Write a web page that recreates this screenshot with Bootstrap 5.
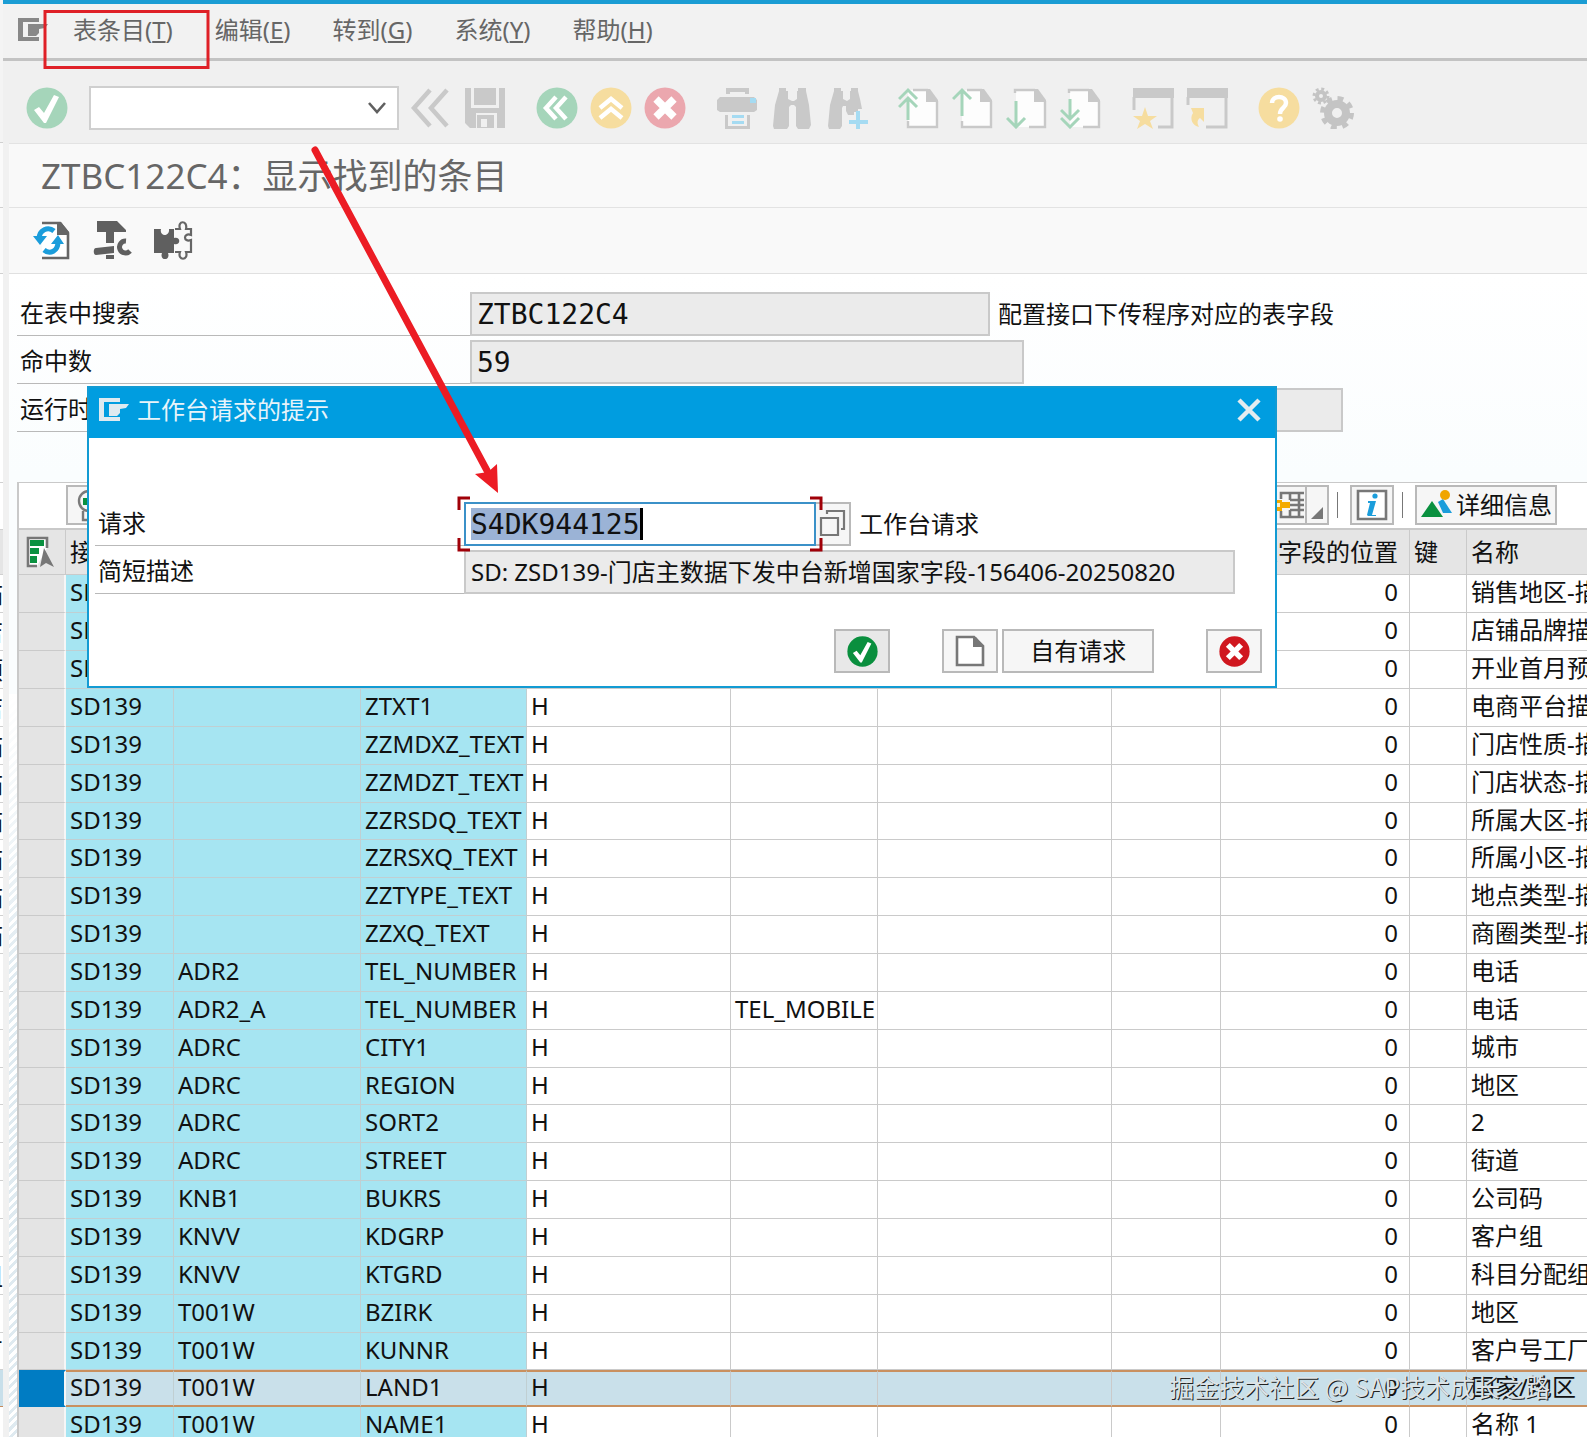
<!DOCTYPE html>
<html lang="zh-CN">
<head>
<meta charset="utf-8">
<meta name="viewport" content="width=device-width, initial-scale=1">
<title>ZTBC122C4：显示找到的条目</title>
<link href="https://cdn.jsdelivr.net/npm/bootstrap@5.3.0/dist/css/bootstrap.min.css" rel="stylesheet">
<style>
  body { font-family: "Noto Sans", "Noto Sans CJK SC", sans-serif; font-size: 24px; line-height: 36px; color: #111; background: #fff; }
  svg { display: block; flex: none; }
  .screen { height: 100vh; overflow: hidden; }
  .sliver { width: 3px; flex: none; overflow: hidden; background: #fff; }
  .sliver div { display: flex; justify-content: flex-end; align-items: center; white-space: nowrap; border-bottom: 1px solid #d0d0d0; height: 38px; }
  .sliver .cut:nth-child(7n+6) { height: 37px; }
  .sliver .s-blank { height: 143px; background: #f4f4f4; }
  .sliver .s-title { height: 65px; background: #fafafa; }
  .sliver .s-tools { height: 66px; background: #fafafa; }
  .sliver .s-form { height: 209px; }
  .sliver .s-bar { height: 47px; }
  .sliver .s-head { height: 45px; background: #e5e5e5; }
  .sliver .s-sel { height: 37px; background: #c8dfea; border-color: #c58a5c; }
  .window { min-width: 0; background: #f1f1f1; }
  .menu-strip { flex: none; height: 61px; padding: 4px 0 6px 15px; border-top: 4px solid #1b9dd4; border-bottom: 3px solid #c3c3c3; background: #f2f2f2; }
  .menu-strip a { color: #666; text-decoration: none; margin-right: 42px; white-space: nowrap; }
  .menu-icon { margin-right: 25px; }
  .std-bar { flex: none; height: 82px; padding: 12px 0 0 23px; background: #f0f0f0; }
  .set { display: flex; gap: 12px; }
  .set.wide { gap: 13px; }
  .sets { display: flex; gap: 30px; }
  .tool { border: 0; background: none; padding: 0; }
  .combo { width: 310px; height: 44px; margin: 0 11px 0 21px; border: 2px solid #cfcfcf; border-radius: 0; background-color: #fff;
    --bs-form-select-bg-img: url("data:image/svg+xml,%3Csvg xmlns='http://www.w3.org/2000/svg' viewBox='0 0 18 12'%3E%3Cpath d='M1 1l8 9 8-9' fill='none' stroke='%23606060' stroke-width='2.6'/%3E%3C/svg%3E");
    background-image: var(--bs-form-select-bg-img); background-size: 18px 12px; background-position: right 11px center; }
  .client { margin-left: 6px; }
  .title-bar { flex: none; height: 65px; border-top: 1px solid #e3e3e3; border-bottom: 1px solid #e3e3e3; background: #f9f9f9; padding-left: 32px; }
  .title-bar h1 { font-size: 35px; font-weight: 400; line-height: 48px; color: #666; margin: 0; }
  .app-bar { flex: none; height: 66px; border-bottom: 1px solid #e0e0e0; background: #f9f9f9; padding-left: 23px; gap: 18px; }
  .work { position: relative; padding: 18px 0 0 8px; background: linear-gradient(#fff, #fafdfe 200px); }
  .hatch { position: absolute; left: 0; top: 420px; bottom: 0; width: 8px; background: linear-gradient(#fff, transparent 300px), repeating-linear-gradient(135deg, #fff 0 3px, #dfeaf0 3px 6px); }
  .field-row { height: 44px; margin-bottom: 4px; }
  .field-row label.cap, .req-row label.cap { border-bottom: 1px solid #b9b9b9; padding-left: 3px; align-self: stretch; line-height: 42px; flex: none; }
  .field-row label.cap { width: 453px; }
  .ro { height: 44px; border: 2px solid #c9c9c9; border-radius: 0; background: #ebebeb; color: #111; padding: 0 5px; flex: none; font-size: 24px; }
  .mono { font-family: "DejaVu Sans Mono", monospace; font-size: 28px; }
  .w-a { width: 520px; } .w-b { width: 554px; } .w-c { width: 873px; }
  .grid-box { margin-top: 50px; border-top: 1px solid #c9c9c9; border-left: 2px solid #c9c9c9; background: #fff; }
  .grid-bar { height: 47px; padding: 2px 30px 4px 47px; border-bottom: 2px solid #c9c9c9; }
  .face { border: 2px solid #b9b9b9; border-radius: 0; background: #f6f6f6; color: #111; padding: 0; height: 40px; display: flex; align-items: center; justify-content: center; font-size: 24px; line-height: 36px; white-space: nowrap; }
  .w-44 { width: 44px; } .w-142 { width: 142px; gap: 4px; }
  .bar-sep { width: 1px; height: 26px; background: #777; }
  .alv { table-layout: fixed; width: 100%; margin: 0; border-collapse: separate; border-spacing: 0; }
  .alv th, .alv td { height: 38px; padding: 0 0 3px 4px; overflow: hidden; white-space: nowrap; font-weight: 400; line-height: 34px; border-right: 1px solid #cacaca; border-bottom: 1px solid #cacaca; }
  .alv tbody tr:nth-child(7n) td { height: 37px; line-height: 33px; }
  .alv th { height: 45px; background: #e5e5e5; padding-bottom: 0; }
  .alv th:last-child, .alv td:last-child { border-right: 0; }
  .alv td:first-child { background: #e4e4e4; border-right: 2px solid #f6f6f6; }
  .alv .key { background: #a6e5f2; border-color: #c0cfd2; }
  .alv .num { text-align: right; padding-right: 11px; }
  .alv tbody .picked td { background: #c9e0ea; height: 37px; border-bottom: 2px solid #c9905f; border-top: 2px solid #c9905f; line-height: 30px; padding-bottom: 3px; }
  .alv tbody .picked td:first-child { background: #007cc3; border-color: #007cc3; border-right: 2px solid #f6f6f6; }
  .ask { position: absolute; left: 87px; top: 386px; width: 75%; height: 302px; border: 2px solid #129bd3; background: #fff; z-index: 2; }
  .ask-head { height: 50px; background: #009de0; color: #e8f4fa; padding: 0 14px 6px 10px; }
  .ask-body { padding: 64px 13px 0 6px; }
  .req-row { height: 44px; margin-bottom: 4px; }
  .req-row label.cap { width: 369px; }
  .entry { width: 352px; height: 44px; border: 2px solid #3b91c8; border-radius: 0; padding: 0 0 0 5px; color: #111;
    background: linear-gradient(#9bb3d6, #9bb3d6) 5px 4px / 169px 32px no-repeat, linear-gradient(#000, #000) 173px 4px / 4px 32px no-repeat, #fff; }
  .entry-wrap { position: relative; flex: none; }
  .brackets { position: absolute; left: -7px; top: -6px; pointer-events: none; z-index: 1; }
  .f4 { width: 35px; height: 44px; border-left: 0; flex: none; }
  .w-desc { width: 771px; padding-bottom: 4px; }
  .ask-foot { margin-top: 35px; }
  .ask-foot .face { height: 44px; }
  .ask-foot .default { background: #e8e8e8; }
  .w-56 { width: 56px; } .w-152 { width: 152px; }
  .gap-a { margin-right: 52px; } .gap-b { margin-right: 4px; }
  .note { position: absolute; left: 0; top: 0; z-index: 3; pointer-events: none; }
  .sign { position: absolute; right: 37px; bottom: 33px; z-index: 3; font-family: "Noto Sans CJK SC", sans-serif; font-size: 25px; color: #dde3e6; text-shadow: 1px 1px 0 #222; white-space: nowrap; pointer-events: none; }
</style>
<script src="https://cdn.jsdelivr.net/npm/bootstrap@5.3.0/dist/js/bootstrap.bundle.min.js"></script>
</head>
<body>
<svg width="0" height="0" class="position-absolute" aria-hidden="true">
  <defs>
    <symbol id="hand" viewBox="0 0 30 24"><path d="M0 0h21v4H5v15h16v4H0zM10 6h20l-3 4-6 1v4l-3 3h-8z"/></symbol>
    <symbol id="tick" viewBox="0 0 42 42"><circle cx="21" cy="21" r="20.5"/><path d="M8 23l5-3 5 6L28 8l5 2-13 26h-2z" fill="#fff"/></symbol>
    <symbol id="cross" viewBox="0 0 42 42"><circle cx="21" cy="21" r="20.5"/><path d="M12 12l18 18M30 12L12 30" stroke="#fff" stroke-width="7.500"/></symbol>
    <symbol id="sheet" viewBox="0 0 42 42"><path d="M12 3h19l9 12v25H10V3z" fill="#fdfdfd"/><path d="M15 3h15M39 14v26H10v-6" fill="none" stroke="#c9c9c9" stroke-width="2.4"/><path d="M28 2h4l8 11v2H28z" fill="#c9c9c9"/></symbol>
    <symbol id="sheet2" viewBox="0 0 42 42"><path d="M12 3h19l9 12v25H10V3z" fill="#fdfdfd"/><path d="M9 6V3h20M39 14v26H23" fill="none" stroke="#c9c9c9" stroke-width="2.4"/><path d="M28 2h4l8 11v2H28z" fill="#c9c9c9"/></symbol>
  </defs>
</svg>

<div class="screen d-flex position-relative">
  <aside class="sliver" id="sliver" aria-hidden="true"></aside>
  <main class="window flex-fill d-flex flex-column">
    <nav class="menu-strip d-flex align-items-center">
      <svg width="30" height="24" fill="#888" class="menu-icon"><use href="#hand"/></svg>
      <a href="#">表条目(<u>T</u>)</a><a href="#">编辑(<u>E</u>)</a><a href="#">转到(<u>G</u>)</a><a href="#">系统(<u>Y</u>)</a><a href="#">帮助(<u>H</u>)</a>
    </nav>

    <div class="std-bar d-flex align-items-center flex-nowrap">
      <button class="tool" aria-label="回车"><svg width="42" height="42" fill="#a5d5ba"><use href="#tick"/></svg></button>
      <select class="form-select combo flex-shrink-0" aria-label="命令"><option></option></select>
      <div class="sets">
        <div class="set">
          <button class="tool" aria-label="收起"><svg width="42" height="42" fill="none" stroke="#c9c9c9" stroke-width="4.5"><path d="M20 3L4 21l16 18M37 3L21 21l16 18"/></svg></button>
          <button class="tool" aria-label="保存"><svg width="42" height="42" fill="#c9c9c9"><path d="M1 1h6v20h28V1h6v40H33V26H12v15H6l-5-5z"/><path d="M10 1h22v17H10zM13 28h17v13H13z"/><path d="M17 32h6v8h-6z" fill="#f0f0f0"/></svg></button>
        </div>
        <div class="set">
          <button class="tool" aria-label="返回"><svg width="42" height="42"><circle cx="21" cy="21" r="20.5" fill="#a5d5ba"/><path d="M20 10L10 21l10 11M30 10L20 21l10 11" fill="none" stroke="#fff" stroke-width="4.5"/></svg></button>
          <button class="tool" aria-label="退出"><svg width="42" height="42"><circle cx="21" cy="21" r="20.5" fill="#f6dd9f"/><path d="M10 21l11-9 11 9M10 31l11-9 11 9" fill="none" stroke="#fff" stroke-width="4.5"/></svg></button>
          <button class="tool" aria-label="取消"><svg width="42" height="42" fill="#eba7ae"><use href="#cross"/></svg></button>
        </div>
        <div class="set wide">
          <button class="tool" aria-label="打印"><svg width="42" height="42" fill="#c9c9c9"><path d="M10 1h23v6h-4V5H14v2h-4zM4 10h34l3 3v10l-3 2H4l-3-2V13z"/><path d="M34 11h6v5h-6zM16 28h12v3H16zM16 34h12v3H16z" fill="#a5dbf2"/><path d="M9 28h3v11h19V28h3v14H9z"/></svg></button>
          <button class="tool" aria-label="查找"><svg width="42" height="42" fill="#c9c9c9"><path d="M8 1h7v3h2v8l4 2h2l3-2V4h1V1h8v3l3 14 2 20-2 4H27l-2-3V20l-2-2h-3l-2 2v19l-2 3H3l-1-3 2-21L8 4z"/></svg></button>
          <button class="tool" aria-label="继续查找"><svg width="42" height="42" fill="#c9c9c9"><path d="M8 1h7v3h2v8l4 2 3-2V4h1V1h7v3l2 8 2 10h-4v3h-4v3h-6l-2-4v-5h-3l-1 2v18l-2 3H3l-1-3 2-21L8 4z"/><path d="M30 24h4v9h8v4h-8v6h-4v-6h-7v-4h7z" fill="#a5dbf2"/></svg></button>
        </div>
        <div class="set">
          <button class="tool" aria-label="第一页"><svg width="42" height="42"><use href="#sheet"/><g fill="none" stroke="#a5d5ba" stroke-width="3"><path d="M1 12L10 3l9 9M1 20l9-9 9 9M10 11v22"/></g></svg></button>
          <button class="tool" aria-label="上一页"><svg width="42" height="42"><use href="#sheet"/><path d="M1 12L10 3l9 9M10 3v26" fill="none" stroke="#a5d5ba" stroke-width="3"/></svg></button>
          <button class="tool" aria-label="下一页"><svg width="42" height="42"><use href="#sheet2"/><path d="M1 31l9 9 9-9M10 40V14" fill="none" stroke="#a5d5ba" stroke-width="3"/></svg></button>
          <button class="tool" aria-label="最后一页"><svg width="42" height="42"><use href="#sheet2"/><path d="M1 23l9 9 9-9M1 31l9 9 9-9M10 32V12" fill="none" stroke="#a5d5ba" stroke-width="3"/></svg></button>
        </div>
        <div class="set">
          <button class="tool" aria-label="新会话"><svg width="42" height="42"><path d="M1 1h41v10H1z" fill="#c9c9c9"/><path d="M2 10v13M40 10v30H26" fill="none" stroke="#c9c9c9" stroke-width="3"/><path d="M13 20l3 9h9l-7 5 3 8-8-5-8 5 3-8-7-5h9z" fill="#f6dd9f"/></svg></button>
          <button class="tool" aria-label="快捷方式"><svg width="42" height="42"><path d="M1 1h41v10H1z" fill="#c9c9c9"/><path d="M2 10v8M40 10v30H20" fill="none" stroke="#c9c9c9" stroke-width="3"/><path d="M5 21h13v14l-4-4c-3 2-3 5-1 9-6-1-10-8-6-14z" fill="#f6dd9f"/></svg></button>
        </div>
        <div class="set">
          <button class="tool" aria-label="帮助"><svg width="42" height="42"><circle cx="21" cy="21" r="20.5" fill="#f6dd9f"/><path d="M14 16c0-8 14-8 14 0 0 5-6 5-6 11" fill="none" stroke="#fff" stroke-width="4.5"/><circle cx="22" cy="32" r="2.8" fill="#fff"/></svg></button>
          <button class="tool" aria-label="定制"><svg width="42" height="42" fill="none" stroke="#c4c4c4"><circle cx="25" cy="26" r="9" stroke-width="8"/><circle cx="25" cy="26" r="14.5" stroke-width="5" stroke-dasharray="5.8 5.6"/><circle cx="9" cy="9" r="4" stroke-width="4"/><circle cx="9" cy="9" r="7" stroke-width="3" stroke-dasharray="2.9 2.6"/></svg></button>
        </div>
      </div>
    </div>

    <div class="client flex-fill d-flex flex-column">
      <header class="title-bar d-flex align-items-center"><h1>ZTBC122C4：显示找到的条目</h1></header>
      <div class="app-bar d-flex align-items-center">
        <button class="tool" aria-label="刷新"><svg width="42" height="42"><path d="M10 3h18l8 10v25H10" fill="#fff" stroke="#666" stroke-width="2.6"/><path d="M25 2h4l8 10v3H25z" fill="#666"/><g fill="none" stroke="#1b9ddb" stroke-width="5"><path d="M7 19c0-9 9-13 15-8"/><path d="M26 22c0 9-8 13-14 8"/></g><path d="M1 16h14l-7 9zM19 24h13l-6-9z" fill="#1b9ddb"/></svg></button>
        <button class="tool" aria-label="工具"><svg width="42" height="42" fill="#5f5f5f"><path d="M5 1h20l9 9v2H22v11h-8V12H5zM4 28l18-2v7L4 35c-3 0-3-7 0-7zM14 35h8v4h-8z"/><path d="M34 21a6 6 0 1 0 4 10" fill="none" stroke="#5f5f5f" stroke-width="5"/></svg></button>
        <button class="tool" aria-label="组件"><svg width="42" height="42"><path d="M2 9h7c-2 8 9 8 8 0h5v9c7-2 7 8 0 6v9h-6c3 8-9 8-6 0H2z" fill="#5f5f5f"/><path d="M23 9h5c-3-9 8-9 6 0h5v6c-8-3-8 8 0 5v12h-5c3 9-9 9-6 0h-5" fill="none" stroke="#666" stroke-width="2.2"/></svg></button>
      </div>

      <div class="work flex-fill">
        <div class="hatch"></div>
        <div class="field-row d-flex align-items-center"><label class="cap" for="tab">在表中搜索</label><input id="tab" class="ro mono w-a" readonly value="ZTBC122C4"><span class="ms-2 text-nowrap">配置接口下传程序对应的表字段</span></div>
        <div class="field-row d-flex align-items-center"><label class="cap" for="hits">命中数</label><input id="hits" class="ro mono w-b" readonly value="59"></div>
        <div class="field-row d-flex align-items-center"><label class="cap" for="run">运行时间</label><input id="run" class="ro mono w-c" readonly></div>

        <section class="grid-box">
          <div class="grid-bar d-flex align-items-center">
            <button class="face w-44" aria-label="详细"><svg width="34" height="34" fill="none" stroke="#7a7a7a" stroke-width="2.4"><circle cx="18" cy="13" r="10"/><path d="M12 23v9h14v-9"/><path d="M12 10h12v7H12z" fill="#0a9140" stroke="none"/></svg></button>
            <div class="d-flex align-items-center ms-auto">
              <button class="face w-44 border-end-0" aria-label="布局"><svg width="40" height="30"><g fill="none" stroke="#777" stroke-width="2.6"><path d="M17 9V3h23M17 21v6h23M26 15h14M26 10h14M26 20h14M26 3v7M35 3v24M26 20v7"/></g><path d="M8 10h10v2h8v6h-8v3H8z" fill="#f4ab00"/><path d="M11 13h5v4h-5z" fill="#fff3d0"/></svg></button>
              <button class="face" aria-label="更多布局"><svg width="20" height="36"><path d="M16 20v12H4z" fill="#777"/></svg></button>
              <span class="bar-sep ms-2 me-2"></span>
              <button class="face w-44 ms-1" aria-label="信息"><svg width="32" height="32"><path d="M2 2h28v28H2z" fill="#fff" stroke="#777" stroke-width="2.6"/><circle cx="19" cy="7" r="2.6" fill="#1b9ddb"/><path d="M12 12h8l-4 14h4v1h-8l-1-1 3-12h-2z" fill="#1b9ddb"/></svg></button>
              <span class="bar-sep ms-2 me-2"></span>
              <button class="face w-142 ms-1"><svg width="32" height="30"><path d="M18 12l5-3 9 14h-9z" fill="#1b9ddb"/><path d="M12 11l11 16H1z" fill="#0a9140"/><circle cx="25" cy="5" r="5" fill="#f0a500"/></svg>详细信息</button>
            </div>
          </div>
          <table class="alv">
            <colgroup><col style="width:47px"><col style="width:108px"><col style="width:187px"><col style="width:166px"><col style="width:204px"><col style="width:147px"><col style="width:234px"><col style="width:109px"><col style="width:189px"><col style="width:57px"><col></colgroup>
            <thead><tr><th scope="col"><svg width="34" height="34"><path d="M24 13V3H5v28h9" fill="#fff" stroke="#777" stroke-width="2.6"/><path d="M7 5h14v6H7zM7 13h9v6H7zM7 21h7v7H7z" fill="#0a9140"/><path d="M21 13l10 19-8-4-6 4z" fill="#777"/></svg></th><th scope="col">接口</th><th></th><th></th><th></th><th></th><th></th><th></th><th scope="col" class="num">表字段的位置</th><th scope="col">键</th><th scope="col">名称</th></tr></thead>
            <tbody id="rows"></tbody>
          </table>
        </section>
      </div>
    </div>
  </main>

  <section class="ask" role="dialog" aria-labelledby="askTitle">
    <div class="ask-head d-flex align-items-center">
      <svg width="30" height="24" fill="#dfeaf0"><use href="#hand"/></svg>
      <span id="askTitle" class="ms-2">工作台请求的提示</span>
      <button class="tool ms-auto" aria-label="关闭"><svg width="24" height="24" stroke="#e3ecf0" stroke-width="4.5"><path d="M2 2l20 20M22 2L2 22"/></svg></button>
    </div>
    <div class="ask-body">
      <div class="req-row d-flex align-items-center">
        <label class="cap" for="req">请求</label>
        <div class="entry-wrap"><input id="req" class="entry mono d-block" value="S4DK944125">
          <svg class="brackets" width="366" height="56" fill="none" stroke="#a00008" stroke-width="3"><path d="M2 14V2h11M353 2h11v12M2 42v12h11M353 54h11V42"/></svg></div>
        <button class="face f4" aria-label="搜索帮助"><svg width="28" height="32" fill="none" stroke="#777" stroke-width="2.2"><path d="M2 10h17v17H2zM8 6V3h17v18h-3"/></svg></button>
        <span class="ms-2 text-nowrap">工作台请求</span>
      </div>
      <div class="req-row d-flex align-items-center">
        <label class="cap" for="desc">简短描述</label><input id="desc" class="ro w-desc" readonly value="SD: ZSD139-门店主数据下发中台新增国家字段-156406-20250820">
      </div>
      <div class="ask-foot d-flex justify-content-end">
        <button class="face default w-56 gap-a" aria-label="确定"><svg width="31" height="31" viewBox="0 0 42 42" fill="#0a8f3e"><use href="#tick"/></svg></button>
        <button class="face w-56 gap-b" aria-label="新建"><svg width="30" height="32"><path d="M2 2h17l9 9v19H2z" fill="#fff" stroke="#777" stroke-width="2.6"/><path d="M18 2h3l7 9v1H18z" fill="#777"/></svg></button>
        <button class="face w-152 gap-a">自有请求</button>
        <button class="face w-56" aria-label="取消"><svg width="31" height="31" viewBox="0 0 42 42" fill="#d0171f"><use href="#cross"/></svg></button>
      </div>
    </div>
  </section>

  <svg class="note" width="520" height="510" fill="none"><path d="M45 11.500h163v56H45z" stroke="#df2027" stroke-width="3"/><path d="M315 150L491 478" stroke="#ec1c24" stroke-width="7" stroke-linecap="round"/><path d="M498 493l-23-19 13-2 9-8z" fill="#ec1c24"/></svg>
  <div class="sign">掘金技术社区 @ SAP技术成长之路</div>
</div>

<script>
  // structure | field | target field | name
  const data = [
    ['', 'ZT', '', '销售地区-描述'], ['', 'ZT', '', '店铺品牌描述'], ['', 'ZT', '', '开业首月预算额'],
    ['', 'ZTXT1', '', '电商平台描述'], ['', 'ZZMDXZ_TEXT', '', '门店性质-描述'], ['', 'ZZMDZT_TEXT', '', '门店状态-描述'],
    ['', 'ZZRSDQ_TEXT', '', '所属大区-描述'], ['', 'ZZRSXQ_TEXT', '', '所属小区-描述'], ['', 'ZZTYPE_TEXT', '', '地点类型-描述'],
    ['', 'ZZXQ_TEXT', '', '商圈类型-描述'], ['ADR2', 'TEL_NUMBER', '', '电话'], ['ADR2_A', 'TEL_NUMBER', 'TEL_MOBILE', '电话'],
    ['ADRC', 'CITY1', '', '城市'], ['ADRC', 'REGION', '', '地区'], ['ADRC', 'SORT2', '', '2'], ['ADRC', 'STREET', '', '街道'],
    ['KNB1', 'BUKRS', '', '公司码'], ['KNVV', 'KDGRP', '', '客户组'], ['KNVV', 'KTGRD', '', '科目分配组'],
    ['T001W', 'BZIRK', '', '地区'], ['T001W', 'KUNNR', '', '客户号工厂'], ['T001W', 'LAND1', '', '国家/地区'], ['T001W', 'NAME1', '', '名称 1']
  ];
  document.getElementById('rows').innerHTML = data.map(([s, f, t, n]) =>
    `<tr${f === 'LAND1' ? ' class="picked"' : ''}><td></td><td class="key">SD139</td><td class="key">${s}</td><td class="key">${f}</td><td>H</td><td>${t}</td><td></td><td></td><td class="num">0</td><td></td><td>${n}</td></tr>`).join('');
  const cuts = ['描', '店', '预', '店', '描', '描', '描', '描', '描', '描', '', '', '', '', '', '', '', '', '组', '', '厂'];
  document.getElementById('sliver').innerHTML =
    ['blank', 'title', 'tools', 'form', 'bar', 'head'].map(k => `<div class="s-${k}"></div>`).join('') +
    cuts.map(c => `<div class="cut">${c}</div>`).join('') + '<div class="s-sel"></div><div></div>';
</script>
</body>
</html>
